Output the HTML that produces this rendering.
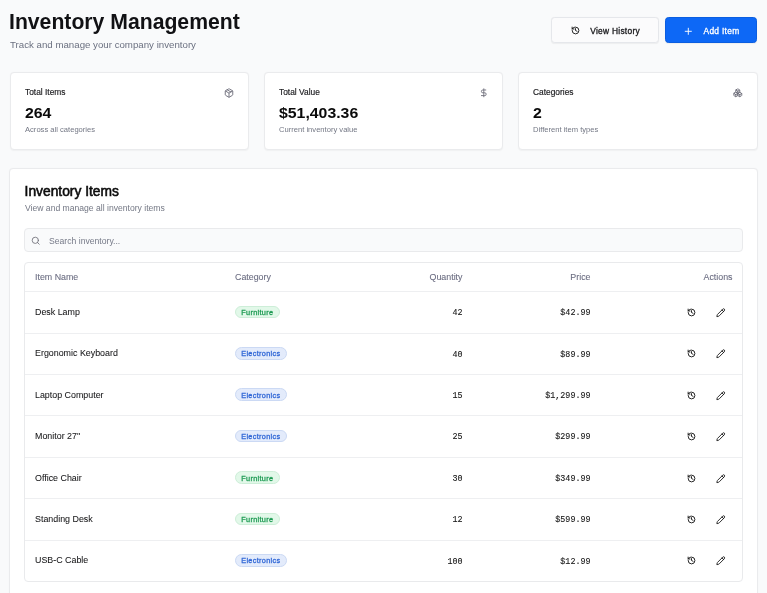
<!DOCTYPE html>
<html><head><meta charset="utf-8">
<style>
*{box-sizing:border-box;margin:0;padding:0}
html,body{will-change:transform;width:767px;height:593px;overflow:hidden;background:#f9fafb;font-family:"Liberation Sans",sans-serif;color:#0a0a0a}
.abs{position:absolute}
.t{position:absolute;white-space:nowrap;line-height:1}
.card{position:absolute;background:#fff;border:1px solid #eaebed;border-radius:4px;box-shadow:0 0.6px 1.2px rgba(0,0,0,0.04)}
.btn{position:absolute;border-radius:3.6px;box-shadow:0 0.6px 1px rgba(0,0,0,0.05)}
svg{position:absolute;overflow:visible}
.mono{font-family:"Liberation Mono",monospace;font-size:8.4px;color:#161616;-webkit-text-stroke:0.1px #161616}
.hl{position:absolute;left:25.4px;width:716.3px;height:1px;background:#eeeff1}
.th{font-size:8.85px;color:#6a6c80;-webkit-text-stroke:0.08px #6a6c80}
.td{font-size:8.9px;color:#161618;-webkit-text-stroke:0.06px #161618}
.badge span{position:absolute;left:0;right:0;top:2.6px;text-align:center}
.row{position:absolute;left:0;width:100%;border-top:1px solid #eceef1}
.badge{position:absolute;border-radius:8px;font-size:7.3px;letter-spacing:0.32px;-webkit-text-stroke:0.28px currentColor;line-height:1}
.fur{background:#e2f8e9;border:1px solid #cdeed8;color:#1c9a52}
.ele{background:#e3ebfb;border:1px solid #cbd9f4;color:#2f66d6}
</style></head><body>

<div class="t" style="left:9px;top:10.6px;font-size:21.2px;font-weight:700;color:#111114">Inventory Management</div>
<div class="t" style="left:10px;top:40px;font-size:9.7px;color:#6b7080">Track and manage your company inventory</div>

<div class="btn" style="left:551.2px;top:17.2px;width:107.8px;height:26.1px;background:#fbfbfc;border:1px solid #e5e7eb"></div>
<svg style="left:571px;top:26px" width="9" height="9" viewBox="0 0 24 24" fill="none" stroke="#111" stroke-width="2.4" stroke-linecap="round" stroke-linejoin="round"><path d="M3 12a9 9 0 1 0 9-9 9.75 9.75 0 0 0-6.74 2.74L3 8"/><path d="M3 3v5h5"/><path d="M12 7v5l4 2"/></svg>
<div class="t" style="left:590.2px;top:27px;font-size:8.4px;letter-spacing:0.28px;-webkit-text-stroke:0.3px #18181b;color:#18181b">View History</div>

<div class="btn" style="left:665px;top:17.3px;width:92px;height:26px;background:#0d68f6;border:1px solid #0b5ee0"></div>
<svg style="left:683.3px;top:25.5px" width="10.6" height="10.6" viewBox="0 0 24 24" fill="none" stroke="#fff" stroke-width="2.1" stroke-linecap="round"><path d="M5 12h14"/><path d="M12 5v14"/></svg>
<div class="t" style="left:703.5px;top:27px;font-size:8.4px;letter-spacing:0.3px;-webkit-text-stroke:0.3px #fff;color:#fff">Add Item</div>

<!-- stat cards -->
<div class="card" style="left:9.5px;top:71.5px;width:239.5px;height:78px"></div>
<div class="card" style="left:263.5px;top:71.5px;width:239.5px;height:78px"></div>
<div class="card" style="left:518px;top:71.5px;width:239.5px;height:78px"></div>

<div class="t" style="left:25px;top:88px;font-size:8.4px;-webkit-text-stroke:0.15px #18181b;color:#18181b">Total Items</div>
<div class="t" style="left:25px;top:106px;font-size:14.4px;font-weight:700;transform:scaleX(1.1);transform-origin:0 0;color:#0a0a0a">264</div>
<div class="t" style="left:25px;top:126px;font-size:7.6px;color:#737784">Across all categories</div>

<div class="t" style="left:279px;top:88px;font-size:8.4px;-webkit-text-stroke:0.15px #18181b;color:#18181b">Total Value</div>
<div class="t" style="left:279px;top:106px;font-size:14.4px;font-weight:700;transform:scaleX(1.1);transform-origin:0 0;color:#0a0a0a">$51,403.36</div>
<div class="t" style="left:279px;top:126px;font-size:7.6px;color:#737784">Current inventory value</div>

<div class="t" style="left:533px;top:88px;font-size:8.4px;-webkit-text-stroke:0.15px #18181b;color:#18181b">Categories</div>
<div class="t" style="left:533px;top:106px;font-size:14.4px;font-weight:700;transform:scaleX(1.1);transform-origin:0 0;color:#0a0a0a">2</div>
<div class="t" style="left:533px;top:126px;font-size:7.6px;color:#737784">Different item types</div>


<svg style="left:224px;top:88.2px" width="10" height="10" viewBox="0 0 24 24" fill="none" stroke="#6b6b78" stroke-width="2.2" stroke-linecap="round" stroke-linejoin="round"><path d="M11 21.73a2 2 0 0 0 2 0l7-4A2 2 0 0 0 21 16V8a2 2 0 0 0-1-1.73l-7-4a2 2 0 0 0-2 0l-7 4A2 2 0 0 0 3 8v8a2 2 0 0 0 1 1.73z"/><path d="M12 22V12"/><path d="m3.3 7 7.703 4.734a2 2 0 0 0 1.994 0L20.7 7"/><path d="m7.5 4.27 9 5.15"/></svg>
<svg style="left:479px;top:87.6px" width="9.6" height="9.6" viewBox="0 0 24 24" fill="none" stroke="#6b6b78" stroke-width="2.2" stroke-linecap="round" stroke-linejoin="round"><path d="M12 2v20"/><path d="M17 5H9.5a3.5 3.5 0 0 0 0 7h5a3.5 3.5 0 0 1 0 7H6"/></svg>
<svg style="left:733px;top:87.6px" width="9.6" height="9.6" viewBox="0 0 24 24" fill="none" stroke="#6b6b78" stroke-width="2.2" stroke-linecap="round" stroke-linejoin="round"><path d="M2.97 12.92A2 2 0 0 0 2 14.63v3.24a2 2 0 0 0 .97 1.71l3 1.8a2 2 0 0 0 2.06 0L12 19v-5.5l-5-3-4.03 2.42Z"/><path d="m7 16.5-4.74-2.85"/><path d="m7 16.5 5-3"/><path d="M7 16.5v5.17"/><path d="M12 13.5V19l3.970 2.38a2 2 0 0 0 2.06 0l3-1.8a2 2 0 0 0 .97-1.71v-3.24a2 2 0 0 0-.97-1.71L17 10.5l-5 3Z"/><path d="m17 16.5-5-3"/><path d="m17 16.5 4.74-2.85"/><path d="M17 16.5v5.17"/><path d="M7.97 4.42A2 2 0 0 0 7 6.130v4.37l5 3 5-3V6.13a2 2 0 0 0-.97-1.71l-3-1.8a2 2 0 0 0-2.06 0l-3 1.8Z"/><path d="m12 8-4.74-2.85"/><path d="m12 8 4.74-2.85"/><path d="M12 13.5V8"/></svg>
<!-- main card -->
<div class="card" style="left:9.3px;top:168.2px;width:748.5px;height:440px"></div>
<div class="t" style="left:24.6px;top:185px;font-size:13.8px;-webkit-text-stroke:0.55px #0a0a0a;color:#0a0a0a">Inventory Items</div>
<div class="t" style="left:25px;top:203.5px;font-size:8.6px;color:#737784">View and manage all inventory items</div>

<div class="abs" style="left:24.4px;top:228px;width:718.3px;height:23.5px;background:#f9fafb;border:1px solid #e9eaec;border-radius:4px"></div>
<div class="t" style="left:49px;top:236.8px;font-size:8.65px;color:#767a88">Search inventory...</div>

<div class="abs" id="tbl" style="left:24.4px;top:261.7px;width:718.3px;height:320px;border:1px solid #e9eaec;border-radius:4px"></div>
<div class="hl" style="top:291.2px"></div>
<div class="t th" style="left:35px;top:273px">Item Name</div>
<div class="t th" style="left:235px;top:273px">Category</div>
<div class="t th" style="right:304.5px;top:273px">Quantity</div>
<div class="t th" style="right:176.5px;top:273px">Price</div>
<div class="t th" style="right:34.5px;top:273px">Actions</div>
<svg style="left:31.4px;top:235.8px" width="9.4" height="9.4" viewBox="0 0 24 24" fill="none" stroke="#71717a" stroke-width="2.2" stroke-linecap="round" stroke-linejoin="round"><circle cx="11" cy="11" r="8"/><path d="m21 21-4.3-4.3"/></svg>
<div class="t td" style="left:35px;top:308.00px">Desk Lamp</div>
<div class="badge fur" style="left:234.6px;top:305.50px;width:45.5px;height:12.8px"><span>Furniture</span></div>
<div class="t mono" style="right:304.5px;top:309.20px">42</div>
<div class="t mono" style="right:176.5px;top:309.20px">$42.99</div>
<svg style="left:687px;top:307.90px" width="9" height="9" viewBox="0 0 24 24" fill="none" stroke="#111" stroke-width="2.4" stroke-linecap="round" stroke-linejoin="round"><path d="M3 12a9 9 0 1 0 9-9 9.75 9.75 0 0 0-6.74 2.74L3 8"/><path d="M3 3v5h5"/><path d="M12 7v5l4 2"/></svg>
<svg style="left:716px;top:307.90px" width="9.5" height="9.5" viewBox="0 0 24 24" fill="none" stroke="#111" stroke-width="2.2" stroke-linecap="round" stroke-linejoin="round"><path d="M21.174 6.812a1 1 0 0 0-3.986-3.987L3.842 16.174a2 2 0 0 0-.5.83l-1.321 4.352a.5.5 0 0 0 .623.622l4.353-1.32a2 2 0 0 0 .83-.497z"/><path d="m15 5 4 4"/></svg>
<div class="hl" style="top:332.60px"></div>
<div class="t td" style="left:35px;top:349.40px">Ergonomic Keyboard</div>
<div class="badge ele" style="left:234.6px;top:346.90px;width:52.5px;height:12.8px"><span>Electronics</span></div>
<div class="t mono" style="right:304.5px;top:350.60px">40</div>
<div class="t mono" style="right:176.5px;top:350.60px">$89.99</div>
<svg style="left:687px;top:349.30px" width="9" height="9" viewBox="0 0 24 24" fill="none" stroke="#111" stroke-width="2.4" stroke-linecap="round" stroke-linejoin="round"><path d="M3 12a9 9 0 1 0 9-9 9.75 9.75 0 0 0-6.74 2.74L3 8"/><path d="M3 3v5h5"/><path d="M12 7v5l4 2"/></svg>
<svg style="left:716px;top:349.30px" width="9.5" height="9.5" viewBox="0 0 24 24" fill="none" stroke="#111" stroke-width="2.2" stroke-linecap="round" stroke-linejoin="round"><path d="M21.174 6.812a1 1 0 0 0-3.986-3.987L3.842 16.174a2 2 0 0 0-.5.83l-1.321 4.352a.5.5 0 0 0 .623.622l4.353-1.32a2 2 0 0 0 .83-.497z"/><path d="m15 5 4 4"/></svg>
<div class="hl" style="top:374.00px"></div>
<div class="t td" style="left:35px;top:390.80px">Laptop Computer</div>
<div class="badge ele" style="left:234.6px;top:388.30px;width:52.5px;height:12.8px"><span>Electronics</span></div>
<div class="t mono" style="right:304.5px;top:392.00px">15</div>
<div class="t mono" style="right:176.5px;top:392.00px">$1,299.99</div>
<svg style="left:687px;top:390.70px" width="9" height="9" viewBox="0 0 24 24" fill="none" stroke="#111" stroke-width="2.4" stroke-linecap="round" stroke-linejoin="round"><path d="M3 12a9 9 0 1 0 9-9 9.75 9.75 0 0 0-6.74 2.74L3 8"/><path d="M3 3v5h5"/><path d="M12 7v5l4 2"/></svg>
<svg style="left:716px;top:390.70px" width="9.5" height="9.5" viewBox="0 0 24 24" fill="none" stroke="#111" stroke-width="2.2" stroke-linecap="round" stroke-linejoin="round"><path d="M21.174 6.812a1 1 0 0 0-3.986-3.987L3.842 16.174a2 2 0 0 0-.5.83l-1.321 4.352a.5.5 0 0 0 .623.622l4.353-1.32a2 2 0 0 0 .83-.497z"/><path d="m15 5 4 4"/></svg>
<div class="hl" style="top:415.40px"></div>
<div class="t td" style="left:35px;top:432.20px">Monitor 27"</div>
<div class="badge ele" style="left:234.6px;top:429.70px;width:52.5px;height:12.8px"><span>Electronics</span></div>
<div class="t mono" style="right:304.5px;top:433.40px">25</div>
<div class="t mono" style="right:176.5px;top:433.40px">$299.99</div>
<svg style="left:687px;top:432.10px" width="9" height="9" viewBox="0 0 24 24" fill="none" stroke="#111" stroke-width="2.4" stroke-linecap="round" stroke-linejoin="round"><path d="M3 12a9 9 0 1 0 9-9 9.75 9.75 0 0 0-6.74 2.74L3 8"/><path d="M3 3v5h5"/><path d="M12 7v5l4 2"/></svg>
<svg style="left:716px;top:432.10px" width="9.5" height="9.5" viewBox="0 0 24 24" fill="none" stroke="#111" stroke-width="2.2" stroke-linecap="round" stroke-linejoin="round"><path d="M21.174 6.812a1 1 0 0 0-3.986-3.987L3.842 16.174a2 2 0 0 0-.5.83l-1.321 4.352a.5.5 0 0 0 .623.622l4.353-1.32a2 2 0 0 0 .83-.497z"/><path d="m15 5 4 4"/></svg>
<div class="hl" style="top:456.80px"></div>
<div class="t td" style="left:35px;top:473.60px">Office Chair</div>
<div class="badge fur" style="left:234.6px;top:471.10px;width:45.5px;height:12.8px"><span>Furniture</span></div>
<div class="t mono" style="right:304.5px;top:474.80px">30</div>
<div class="t mono" style="right:176.5px;top:474.80px">$349.99</div>
<svg style="left:687px;top:473.50px" width="9" height="9" viewBox="0 0 24 24" fill="none" stroke="#111" stroke-width="2.4" stroke-linecap="round" stroke-linejoin="round"><path d="M3 12a9 9 0 1 0 9-9 9.75 9.75 0 0 0-6.74 2.74L3 8"/><path d="M3 3v5h5"/><path d="M12 7v5l4 2"/></svg>
<svg style="left:716px;top:473.50px" width="9.5" height="9.5" viewBox="0 0 24 24" fill="none" stroke="#111" stroke-width="2.2" stroke-linecap="round" stroke-linejoin="round"><path d="M21.174 6.812a1 1 0 0 0-3.986-3.987L3.842 16.174a2 2 0 0 0-.5.83l-1.321 4.352a.5.5 0 0 0 .623.622l4.353-1.32a2 2 0 0 0 .83-.497z"/><path d="m15 5 4 4"/></svg>
<div class="hl" style="top:498.20px"></div>
<div class="t td" style="left:35px;top:515.00px">Standing Desk</div>
<div class="badge fur" style="left:234.6px;top:512.50px;width:45.5px;height:12.8px"><span>Furniture</span></div>
<div class="t mono" style="right:304.5px;top:516.20px">12</div>
<div class="t mono" style="right:176.5px;top:516.20px">$599.99</div>
<svg style="left:687px;top:514.90px" width="9" height="9" viewBox="0 0 24 24" fill="none" stroke="#111" stroke-width="2.4" stroke-linecap="round" stroke-linejoin="round"><path d="M3 12a9 9 0 1 0 9-9 9.75 9.75 0 0 0-6.74 2.74L3 8"/><path d="M3 3v5h5"/><path d="M12 7v5l4 2"/></svg>
<svg style="left:716px;top:514.90px" width="9.5" height="9.5" viewBox="0 0 24 24" fill="none" stroke="#111" stroke-width="2.2" stroke-linecap="round" stroke-linejoin="round"><path d="M21.174 6.812a1 1 0 0 0-3.986-3.987L3.842 16.174a2 2 0 0 0-.5.83l-1.321 4.352a.5.5 0 0 0 .623.622l4.353-1.32a2 2 0 0 0 .83-.497z"/><path d="m15 5 4 4"/></svg>
<div class="hl" style="top:539.60px"></div>
<div class="t td" style="left:35px;top:556.40px">USB-C Cable</div>
<div class="badge ele" style="left:234.6px;top:553.90px;width:52.5px;height:12.8px"><span>Electronics</span></div>
<div class="t mono" style="right:304.5px;top:557.60px">100</div>
<div class="t mono" style="right:176.5px;top:557.60px">$12.99</div>
<svg style="left:687px;top:556.30px" width="9" height="9" viewBox="0 0 24 24" fill="none" stroke="#111" stroke-width="2.4" stroke-linecap="round" stroke-linejoin="round"><path d="M3 12a9 9 0 1 0 9-9 9.75 9.75 0 0 0-6.74 2.74L3 8"/><path d="M3 3v5h5"/><path d="M12 7v5l4 2"/></svg>
<svg style="left:716px;top:556.30px" width="9.5" height="9.5" viewBox="0 0 24 24" fill="none" stroke="#111" stroke-width="2.2" stroke-linecap="round" stroke-linejoin="round"><path d="M21.174 6.812a1 1 0 0 0-3.986-3.987L3.842 16.174a2 2 0 0 0-.5.83l-1.321 4.352a.5.5 0 0 0 .623.622l4.353-1.32a2 2 0 0 0 .83-.497z"/><path d="m15 5 4 4"/></svg>

</body></html>
